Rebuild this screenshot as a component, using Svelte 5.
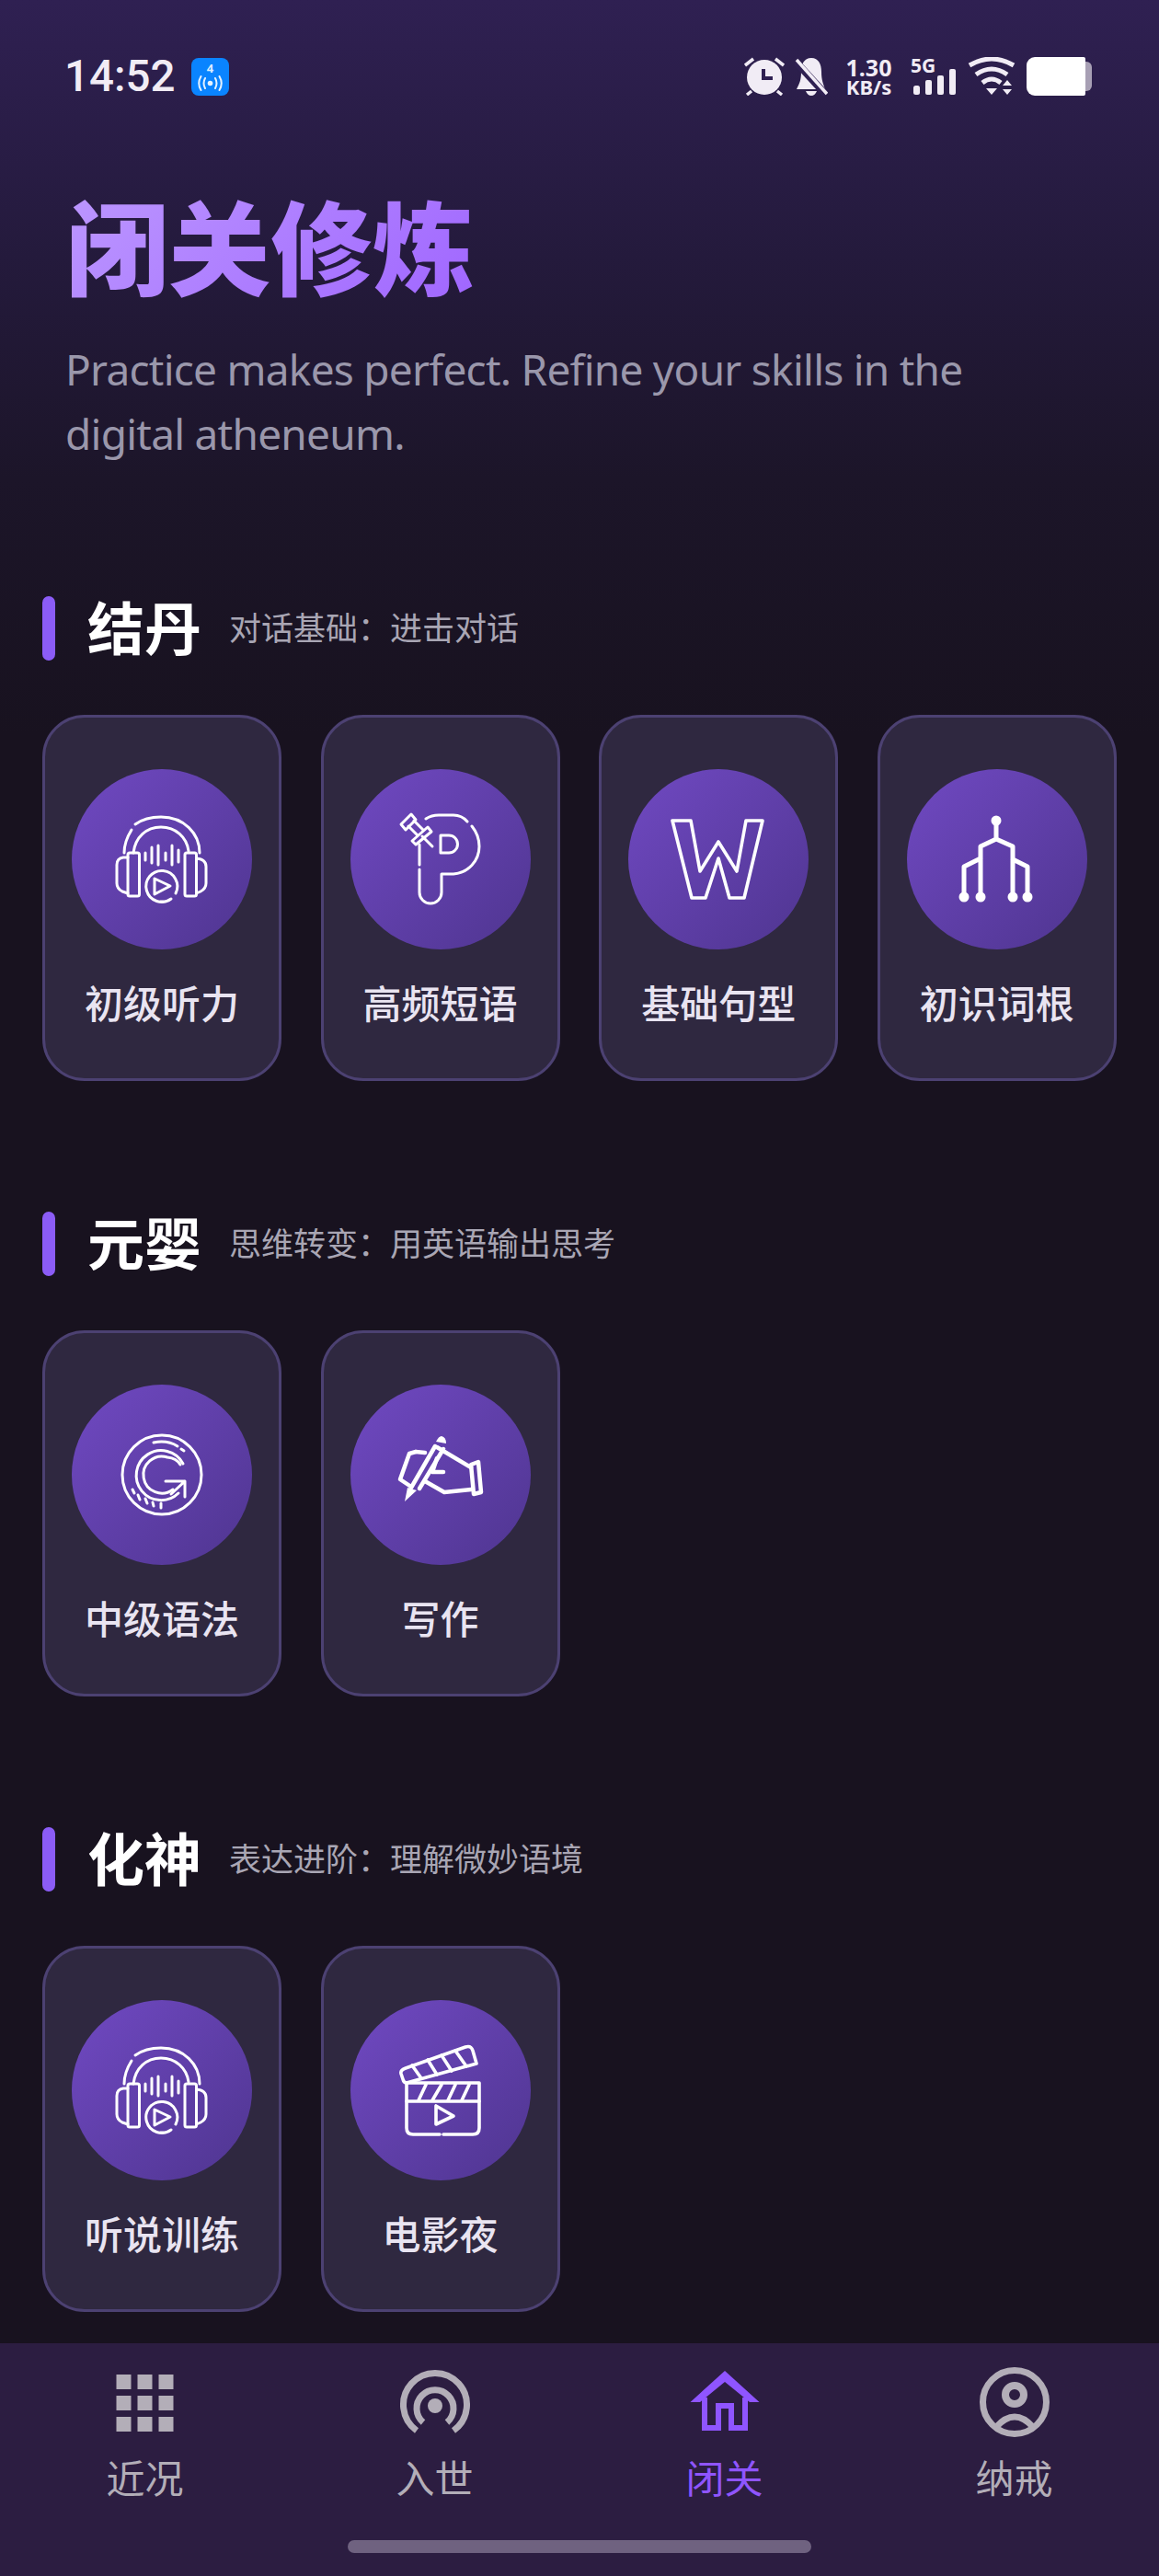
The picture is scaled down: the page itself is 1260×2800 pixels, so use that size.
<script>
  const sections = [
    { name: '结丹', desc: '对话基础：进击对话', items: [
      { icon: 'phones', label: '初级听力' },
      { icon: 'pin', label: '高频短语' },
      { icon: 'word', label: '基础句型' },
      { icon: 'tree', label: '初识词根' }
    ] },
    { name: '元婴', desc: '思维转变：用英语输出思考', items: [
      { icon: 'grammar', label: '中级语法' },
      { icon: 'pen', label: '写作' }
    ] },
    { name: '化神', desc: '表达进阶：理解微妙语境', items: [
      { icon: 'phones', label: '听说训练' },
      { icon: 'clapper', label: '电影夜' }
    ] }
  ];
  const tabs = [
    { icon: 'grid', label: '近况' },
    { icon: 'signal', label: '入世' },
    { icon: 'home', label: '闭关', active: true },
    { icon: 'person', label: '纳戒' }
  ];
</script>

{#snippet glyph(name)}
  <svg class="glyph" viewBox="0 0 196 196" width="196" height="196" aria-hidden="true">
    {#if name === 'phones'}
      <path d="M57 91 C57 82 60 74 65 66 M69 60 C76 55 86 52 97 52 C122 52 139 70 139 91" />
      <path d="M67 91 C69 74 81 63 97 63 C113 63 125 74 127 89" />
      <rect x="61" y="91" width="12.5" height="47" rx="2" />
      <rect x="123" y="91" width="12.5" height="47" rx="2" />
      <path d="M61 96 H56 Q49 97 49 104 V124 Q49 130 55 133 L61 135" />
      <path d="M135.500 97 Q146 98 146 106 V124 Q146 130 140 133 L135.500 135" />
      <path d="M80 91 V99 M87 85 V102 M94 83 V104 M102 91 V99 M109 83 V104 M116 88 V101" />
      <path d="M108 141 A17 17 0 1 1 113 135 M102 144 L96 144" />
      <path d="M90 119 V136 L107 127 Z" />
    {:else if name === 'pin'}
      <path d="M75 104 V82 M82 54 Q88 50 96 50 H112 Q121 50 127 57 M132 62 Q140 72 140 84 A30 30 0 0 1 112 114 H99 V134 A12 12 0 0 1 75 134 V109" />
      <path d="M98 72 H107 A9.500 9.500 0 0 1 107 91 H98 Z" />
      <path d="M55 60 L66 49 L71 55 L60 66 Z" />
      <path d="M63 62 L73 72 M69 56 L79 66" />
      <path d="M67 78 L84 63 L88 68 L71 82 Z" />
      <path d="M78 73 L89 84" />
    {:else if name === 'word'}
      <path class="thick" d="M48 56 H68 L78 111 L98 79 L118 111 L128 56 H146 L126 140 H110 L98 97 L84 140 H69 Z" />
    {:else if name === 'tree'}
      <path class="bold" d="M97 56 V76 L80 84 V139 M97 76 L115 84 V139 M80 97 L62 106 V139 M115 98 L131 106 V139" />
      <circle class="dot" cx="97" cy="56" r="5.500" />
      <circle class="dot" cx="62" cy="139" r="5.500" />
      <circle class="dot" cx="80" cy="139" r="5.500" />
      <circle class="dot" cx="115" cy="139" r="5.500" />
      <circle class="dot" cx="131" cy="139" r="5.500" />
    {:else if name === 'grammar'}
      <circle cx="98" cy="98" r="43" />
      <path d="M89 63 Q104 60 115 67 M119 70 L122 72" />
      <path d="M121 86 A27 27 0 1 0 116 118" />
      <path d="M118 87 Q114 80 104 79 A20 20 0 1 0 110 114" />
      <path d="M102 105 H123 V122 M123 105 L108 119" />
      <path d="M66 114 L68 118 M72 120 L74 125 M80 124 L82 129 M88 128 L89 132 M97 129 L97 134" />
    {:else if name === 'pen'}
      <path class="heavy" d="M71 73 L64 75 L54 103 L66 111" />
      <path class="heavy" d="M71 73 L81 74 M94 68 L131 90 M81 105 L102 117 L131 114" />
      <path class="heavy" d="M94 80 L89 95 L101 95" />
      <path class="heavy" d="M66 112 L92 67 M75 113 L101 70" />
      <path class="heavy" d="M131 87 L139 84 L142 117 L134 119 Z" />
      <path class="solid" d="M59 127 L72 115 L62 112 Z M93 62 Q96 56 99 56 Q104 57 104 64 Z" />
    {:else if name === 'clapper'}
      <path class="thick" d="M60 74 L125 51 Q131 49 133 55 L137 69 L61 90 Q58 90 57 86 L55 80 Q54 76 60 74 Z" />
      <path class="thick" d="M67 71 L77 85 M84 65 L94 81 M99 60 L110 77 M114 55 L126 72" />
      <path class="thick" d="M61 90 H140 V110 H61 Z" />
      <path class="thick" d="M82 92 L74 109 M99 92 L89 109 M114 92 L106 109 M129 92 L121 109" />
      <path class="thick" d="M97 146 H68 Q61 146 61 139 V110 M101 146 H133 Q140 146 140 139 V110" />
      <path class="thick" d="M93 115 V135 L112 126 Z" />
    {/if}
  </svg>
{/snippet}

{#snippet tabIcon(name)}
  <svg class="tabicon" viewBox="0 0 80 80" width="80" height="80" aria-hidden="true">
    {#if name === 'grid'}
      {#each [9, 32, 55] as y}
        {#each [8.5, 31.5, 54.5] as x}
          <rect {x} {y} width="16" height="16" />
        {/each}
      {/each}
    {:else if name === 'signal'}
      <path class="line" d="M20 70 A34.500 34.500 0 1 1 60 70" />
      <path class="line" d="M27 61 A20 20 0 1 1 53 61" />
      <circle cx="40" cy="43" r="8" />
    {:else if name === 'home'}
      <path d="M2.500 39 L40 5 L77.500 39 H67 L40 17 L13 39 Z" />
      <path class="line thin" d="M18 34 V67 H33 V43 H47 V67 H62 V34" />
    {:else if name === 'person'}
      <circle class="line" cx="40" cy="39" r="34.500" />
      <circle class="line head" cx="40" cy="31" r="10" />
      <path class="line" d="M20 66 Q40 44 60 66" />
    {/if}
  </svg>
{/snippet}

<div class="page">
  <header class="status">
    <div class="left">
      <span class="time">14:52</span>
      <span class="hotspot">
        <b>4</b>
        <svg viewBox="0 0 31 17" width="31" height="17" aria-hidden="true">
          <circle cx="15.500" cy="8.500" r="2.800" />
          <path d="M10 3 Q7 8.500 10 14 M21 3 Q24 8.500 21 14 M5.500 1 Q1 8.500 5.500 16 M25.500 1 Q30 8.500 25.500 16" />
        </svg>
      </span>
    </div>
    <div class="right">
      <svg class="s-alarm" viewBox="0 0 44 42" width="44" height="42" aria-hidden="true">
        <circle cx="22" cy="22" r="19" />
        <path class="st" d="M1 9 L10 2 M34 2 L43 9 M3 41 L8 37 M36 37 L41 41" />
        <path class="hand" d="M21 13 V23 H31" />
      </svg>
      <svg class="s-bell" viewBox="0 0 36 42" width="36" height="42" aria-hidden="true">
        <path d="M18 1 C26 1 29 8 29 16 C29 25 31 29 33 35 H2 C5 29 7 25 7 16 C7 8 10 1 18 1 Z M12 37 H24 Q22 42 18 42 Q14 42 12 37 Z" />
        <path class="cut" d="M1 5 L34 41" />
        <path class="st" d="M2 3 L35 40" />
      </svg>
      <div class="speed"><span>1.30</span><span class="unit">KB/s</span></div>
      <div class="cell">
        <span class="fiveg">5G</span>
        <svg viewBox="0 0 50 42" width="50" height="42" aria-hidden="true">
          <rect x="3" y="31" width="7" height="10" rx="2.500" />
          <rect x="16" y="25" width="7" height="16" rx="2" />
          <rect x="29" y="20" width="7" height="21" rx="2" />
          <rect x="42" y="13" width="7" height="28" rx="2" />
        </svg>
      </div>
      <svg class="s-wifi" viewBox="0 0 52 42" width="52" height="42" aria-hidden="true">
        <path class="st" d="M2 9 Q26 -5 50 9 M9 19 Q26 7 43 19 M16 28 Q26 20 36 28" />
        <path d="M20 34 H32 L26 41 Z M38 31 L43 25 L48 31 Z M38 35 H48 L43 41 Z" />
      </svg>
      <div class="battery"><i></i><u></u></div>
    </div>
  </header>

  <main>
    <section class="hero">
      <h1>闭关修炼</h1>
      <p>Practice makes perfect. Refine your skills in the digital atheneum.</p>
    </section>

    {#each sections as section}
      <section class="group">
        <div class="head">
          <span class="bar"></span>
          <h2>{section.name}</h2>
          <span class="desc">{section.desc}</span>
        </div>
        <div class="cards">
          {#each section.items as item}
            <div class="card">
              <div class="disc">{@render glyph(item.icon)}</div>
              <div class="label">{item.label}</div>
            </div>
          {/each}
        </div>
      </section>
    {/each}
  </main>

  <nav>
    <div class="tabs">
      {#each tabs as tab}
        <div class="tab" class:active={tab.active}>
          {@render tabIcon(tab.icon)}
          <span>{tab.label}</span>
        </div>
      {/each}
    </div>
    <div class="homebar"></div>
  </nav>
</div>

<style>
  :global(body) { margin: 0; background: #18121f; }
  .page {
    width: 1260px;
    height: 2800px;
    display: flex;
    flex-direction: column;
    overflow: hidden;
    background: linear-gradient(180deg, #2f2052 0, #241a3c 280px, #1c1529 520px, #18121f 800px);
    font-family: "Noto Sans CJK SC", "Noto Sans", sans-serif;
  }
  .status {
    display: flex;
    justify-content: space-between;
    padding: 62px 73px 0 70px;
    height: 42px;
    color: #f1ecf5;
  }
  .left { display: flex; gap: 21px; align-items: center; }
  .time { font: 500 47.500px/42px Roboto, sans-serif; width: 117px; white-space: nowrap; }
  .hotspot {
    width: 41px; height: 41px; border-radius: 8px; background: #0a84ff;
    display: flex; flex-direction: column; align-items: center; justify-content: flex-end;
    padding-bottom: 5px; box-sizing: border-box;
  }
  .hotspot b { font: 700 13px/13px "Noto Sans", sans-serif; color: #dcecff; margin-bottom: 1px; }
  .hotspot svg circle { fill: #e6f2ff; }
  .hotspot svg path { fill: none; stroke: #e6f2ff; stroke-width: 2; stroke-linecap: round; }
  .right { display: flex; align-items: flex-start; }
  .right svg { fill: #f1ecf5; display: block; }
  .st { fill: none; stroke: #f1ecf5; stroke-width: 4; }
  .s-alarm .st { stroke-width: 3.5; }
  .hand { fill: none; stroke: #2f2052; stroke-width: 4; }
  .cut { fill: none; stroke: #2f2052; stroke-width: 8; }
  .s-bell { margin-left: 11px; }
  .s-bell .st { stroke-width: 3.5; }
  .speed {
    margin-left: 19px; width: 51px;
    display: flex; flex-direction: column; align-items: center;
    font: 700 25px/22px "Noto Sans", sans-serif;
  }
  .speed .unit { font-size: 22px; line-height: 20px; white-space: nowrap; }
  .cell { position: relative; margin-left: 20px; width: 50px; }
  .fiveg { position: absolute; left: 0; top: -3px; font: 700 21px/24px "Noto Sans", sans-serif; }
  .s-wifi { margin-left: 12px; }
  .s-wifi .st { stroke-width: 5; }
  .battery { margin-left: 12px; display: flex; align-items: center; height: 42px; }
  .battery i { width: 64px; height: 42px; background: #fff; border-radius: 9px 2px 2px 9px; }
  .battery u { width: 7px; height: 32px; background: #a79fb4; border-radius: 0 6px 6px 0; }

  main { flex: 1; padding: 0 45px 0 46px; }
  .hero { margin-top: 96px; }
  h1 {
    margin: 0 0 0 26px;
    font-size: 111px;
    line-height: 130px;
    font-weight: 900;
    background: linear-gradient(135deg, #bc97ff, #a066ff);
    -webkit-background-clip: text;
    background-clip: text;
    color: transparent;
    width: fit-content;
  }
  .hero p {
    margin: 36px 0 0 25px;
    width: 1050px;
    font: 400 46px/70px "Noto Sans", sans-serif;
    letter-spacing: -0.750px;
    color: #9a97ab;
  }
  .group { margin-top: 142px; }
  .head { display: flex; align-items: center; height: 70px; }
  .bar { width: 14px; height: 70px; border-radius: 7px; background: #8b5cf6; }
  h2 { margin: 0 0 6px 35px; font-size: 62px; line-height: 70px; font-weight: 700; color: #fff; }
  .desc { margin: 0 0 5px 30px; font-size: 35px; line-height: 50px; color: #a9a6b4; }
  .cards { margin-top: 59px; display: grid; grid-template-columns: repeat(4, 260px); gap: 42.600px; }
  .card {
    height: 398px;
    box-sizing: border-box;
    padding-top: 56px;
    border: 3px solid #4c4172;
    border-radius: 46px;
    background: #2f2840;
    display: flex;
    flex-direction: column;
    align-items: center;
  }
  .disc {
    width: 196px; height: 196px; border-radius: 50%;
    background: linear-gradient(135deg, #7049c2 0, #4f3590 100%);
  }
  .glyph { display: block; fill: none; stroke: #fff; stroke-width: 3; stroke-linecap: round; stroke-linejoin: round; }
  .glyph .thick { stroke-width: 3.600; }
  .glyph .heavy { stroke-width: 4.500; }
  .glyph .bold { stroke-width: 5; }
  .glyph .dot { fill: #fff; stroke: none; }
  .glyph .solid { fill: #fff; stroke: none; }
  .label { margin-top: 32px; font-size: 42px; line-height: 50px; font-weight: 500; color: #e9e4f1; white-space: nowrap; }

  nav { height: 253px; background: #2c1d41; }
  .tabs { display: grid; grid-template-columns: repeat(4, 315px); padding-top: 25px; }
  .tab { display: flex; flex-direction: column; align-items: center; color: #b3aeb8; }
  .tab.active { color: #8f55ff; }
  .tab span { margin-top: 15px; font-size: 42px; line-height: 50px; }
  .tabicon { display: block; fill: currentColor; }
  .tabicon .line { fill: none; stroke: currentColor; stroke-width: 7; }
  .tabicon .thin { stroke-width: 6; }
  .tabicon .head { stroke-width: 8; }
  .homebar { margin: 44px auto 0; width: 504px; height: 14px; border-radius: 7px; background: #6f6280; }
</style>
